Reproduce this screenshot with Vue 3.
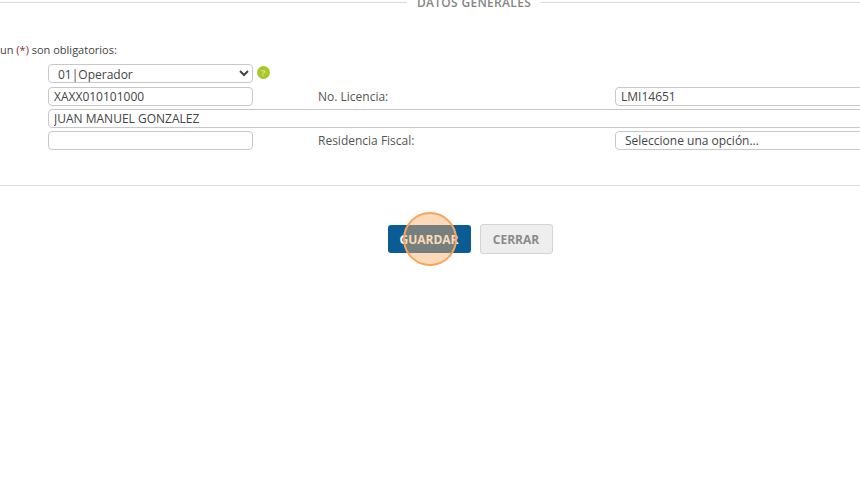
<script setup>
const title = 'DATOS GENERALES'
</script>

<template>
  <main class="page">
    <div class="sheet">
      <header class="legend">
        <span class="rule"></span>
        <h2 class="legend-title">{{ title }}</h2>
        <span class="rule"></span>
      </header>

      <p class="note">un <span class="req">(*)</span> son obligatorios:</p>

      <form class="form" @submit.prevent>
        <div class="row first">
          <select class="field short select-native">
            <option>01|Operador</option>
          </select>
          <span class="help">?</span>
        </div>
        <div class="row">
          <input class="field short" value="XAXX010101000" />
          <label class="label">No. Licencia:</label>
          <input class="field long" value="LMI14651" />
        </div>
        <div class="row">
          <input class="field full" value="JUAN MANUEL GONZALEZ" />
        </div>
        <div class="row">
          <input class="field short" value="" />
          <label class="label">Residencia Fiscal:</label>
          <div class="field long fake-select">Seleccione una opción...</div>
        </div>
      </form>

      <hr class="divider" />

      <div class="actions">
        <button class="btn primary" type="button">GUARDAR<span class="spot"></span></button>
        <button class="btn secondary" type="button">CERRAR</button>
      </div>
    </div>
  </main>
</template>

<style scoped>
.page {
  width: 860px;
  height: 481px;
  overflow: hidden;
  background: #fff;
  font-family: "Open Sans", sans-serif;
  font-size: 12px;
  color: #444;
}
.sheet {
  width: 948px;
}
.legend {
  display: flex;
  align-items: center;
  gap: 10px;
  height: 12px;
  margin-top: -3px;
}
.rule {
  flex: 1;
  height: 1px;
  margin-bottom: 2px;
  background: #d9d9d9;
}
.legend-title {
  margin: 0;
  font-size: 12px;
  line-height: 12px;
  font-weight: 600;
  color: #858585;
  letter-spacing: 0.3px;
}
.note {
  margin: 33px 0 0;
  height: 16px;
  line-height: 16px;
  font-size: 11px;
  color: #444;
}
.req {
  color: #8f2a35;
}
.form {
  display: flex;
  flex-direction: column;
  gap: 4px;
  margin-top: 6px;
  padding-left: 48px;
}
.row {
  display: flex;
  align-items: center;
  height: 18px;
}
.first {
  margin-bottom: 1px;
}
.field {
  box-sizing: border-box;
  height: 19px;
  border: 1px solid #c8c8c8;
  border-radius: 4px;
  background: #fff;
  font-family: "Open Sans", sans-serif;
  font-size: 12px;
  color: #444;
  padding: 0 5px;
  outline: none;
}
.short {
  width: 205px;
  flex: none;
}
.select-native {
  padding-left: 5px;
}
.long {
  width: 300px;
  flex: none;
}
.full {
  width: 852px;
  flex: none;
}
.fake-select {
  line-height: 17px;
  padding-left: 9px;
}
.label {
  width: 297px;
  margin-left: 65px;
  flex: none;
  color: #555;
  font-size: 12px;
}
.help {
  width: 13px;
  height: 13px;
  margin-left: 4px;
  margin-top: -1px;
  border-radius: 50%;
  background: #a9c72a;
  color: #d9e68a;
  font-size: 9px;
  font-weight: 700;
  line-height: 13px;
  text-align: center;
}
.divider {
  margin: 36px 0 0;
  border: 0;
  height: 1px;
  background: #dcdcdc;
}
.actions {
  display: flex;
  align-items: center;
  justify-content: center;
  gap: 9px;
  margin-top: 38px;
  padding-right: 8px;
}
.btn {
  position: relative;
  box-sizing: border-box;
  font-family: "Open Sans", sans-serif;
  font-size: 12px;
  font-weight: 700;
  border-radius: 3px;
  padding: 0;
}
.primary {
  width: 83px;
  height: 28px;
  background: #0b5c94;
  color: #fff;
  border: 0;
}
.secondary {
  width: 73px;
  height: 30px;
  background: #eeeeee;
  color: #8a8a8a;
  border: 1px solid #d4d4d4;
}
.spot {
  position: absolute;
  left: 15px;
  top: -13px;
  width: 54px;
  height: 54px;
  box-sizing: border-box;
  border-radius: 50%;
  border: 2px solid #f5a55c;
  background: rgba(248, 170, 100, 0.45);
}
</style>
